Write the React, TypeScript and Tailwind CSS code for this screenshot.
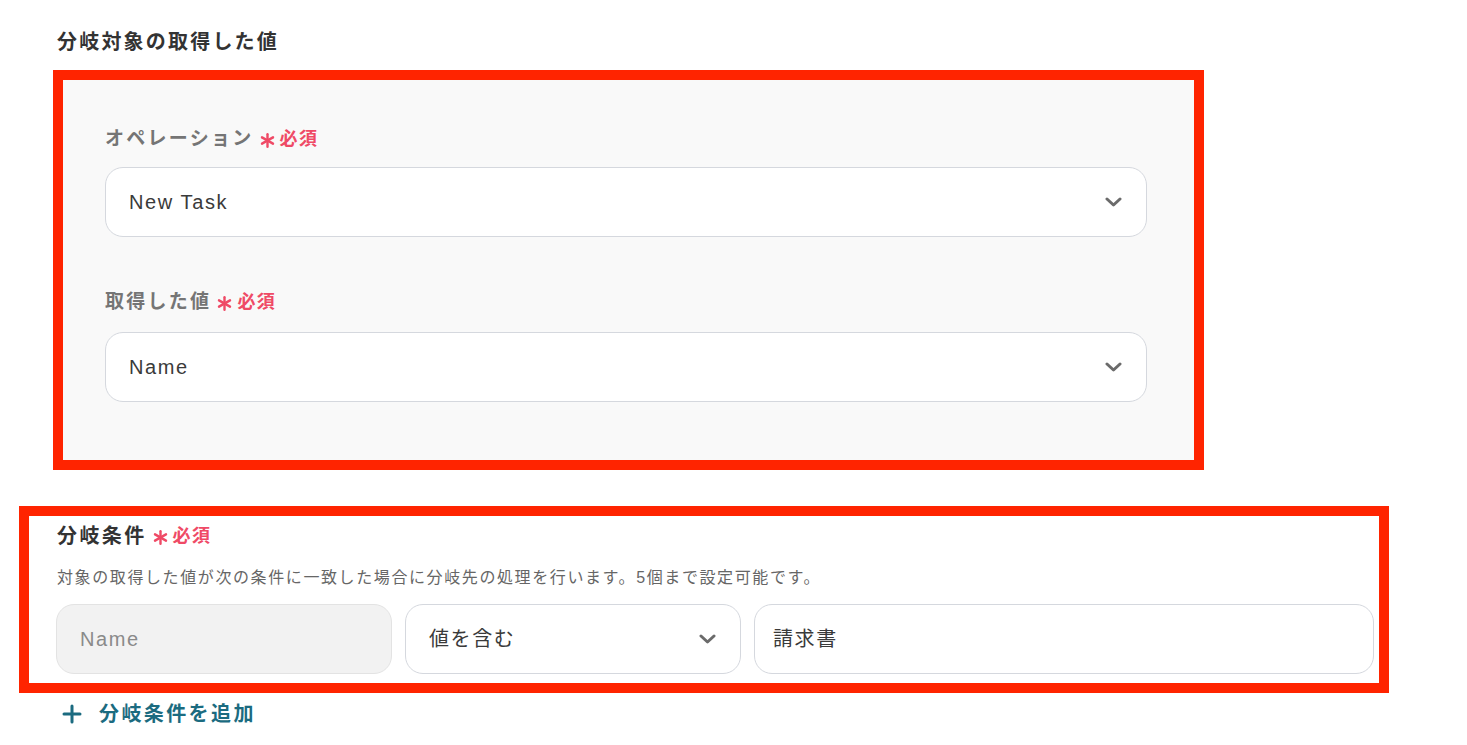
import type { ReactNode } from 'react';

const font = { fontFamily: '"Liberation Sans", "Noto Sans CJK JP", sans-serif' };

function Chevron() {
  return (
    <svg width="17" height="10" viewBox="0 0 17 10" fill="none" className="shrink-0">
      <path d="M2 2l6.5 6 6.5-6" stroke="#6b6b6b" strokeWidth="3" strokeLinecap="round" strokeLinejoin="round" />
    </svg>
  );
}

function Asterisk() {
  return (
    <svg width="15" height="15" viewBox="0 0 15 15" className="mt-[3px] shrink-0">
      <g stroke="#ef4a66" strokeWidth="2.4" strokeLinecap="round">
        <line x1="7.5" y1="1.2" x2="7.5" y2="13.8" />
        <line x1="2" y1="4.35" x2="13" y2="10.65" />
        <line x1="2" y1="10.65" x2="13" y2="4.35" />
      </g>
    </svg>
  );
}

function Required() {
  return (
    <span className="ml-[6px] flex items-center gap-[5px]">
      <Asterisk />
      <span className="text-[18px] font-bold tracking-[0.08em] text-[#ef4a66]">必須</span>
    </span>
  );
}

function Label({ children, dark }: { children: ReactNode; dark?: boolean }) {
  return (
    <div className="flex h-[28px] items-center">
      <span
        className={
          dark
            ? 'text-[20px] font-bold tracking-[0.12em] text-[#333]'
            : 'text-[19px] font-bold tracking-[0.12em] text-[#757575]'
        }
      >
        {children}
      </span>
      <Required />
    </div>
  );
}

function Select({ value, className }: { value: string; className?: string }) {
  return (
    <div className={`flex h-[70px] items-center justify-between rounded-[18px] border border-[#d5d8de] bg-white pl-[23px] pr-[24px] ${className ?? ''}`}>
      <span className="text-[20px] tracking-[0.08em] text-[#3a3a3a]">{value}</span>
      <Chevron />
    </div>
  );
}

export default function App() {
  return (
    <div style={font} className="min-h-[745px] w-[1467px] bg-white pt-[28px]">
      <h2 className="ml-[57px] h-[28px] text-[20px] leading-[28px] font-bold tracking-[0.11em] text-[#333]">分岐対象の取得した値</h2>

      <div className="mt-[14px] ml-[53px] w-[1151px] border-[10px] border-[#ff2400] bg-[#f9f9f9] pt-[45px] pr-[47px] pb-[58px] pl-[42px]">
        <Label>オペレーション</Label>
        <Select value="New Task" className="mt-[14px]" />
        <div className="mt-[51px]">
          <Label>取得した値</Label>
        </div>
        <Select value="Name" className="mt-[16px]" />
      </div>

      <div className="mt-[36px] ml-[19px] w-[1370px] border-[10px] border-[#ff2400] pt-[6px] pr-[5px] pb-[9px] pl-[27px]">
        <div className="pl-[1px]">
          <Label dark>分岐条件</Label>
        </div>
        <p className="mt-[16px] pl-[1px] text-[16px] leading-[24px] tracking-[0.1em] text-[#666]">
          対象の取得した値が次の条件に一致した場合に分岐先の処理を行います。5個まで設定可能です。
        </p>
        <div className="mt-[14px] flex gap-[13px]">
          <div className="flex h-[70px] w-[336px] items-center rounded-[18px] border border-[#e3e3e3] bg-[#f2f2f2] pl-[23px]">
            <span className="text-[20px] tracking-[0.08em] text-[#8a8a8a]">Name</span>
          </div>
          <Select value="値を含む" className="w-[336px]" />
          <div className="flex h-[70px] flex-1 items-center rounded-[18px] border border-[#d5d8de] bg-white pl-[18px]">
            <span className="text-[20px] tracking-[0.08em] text-[#3a3a3a]">請求書</span>
          </div>
        </div>
      </div>

      <button className="mt-[7px] ml-[62px] flex h-[28px] items-center gap-[17px] text-[#1b6b80]">
        <svg width="20" height="20" viewBox="0 0 20 20" fill="none">
          <path d="M10 2v16M2 10h16" stroke="#1b6b80" strokeWidth="3" strokeLinecap="round" />
        </svg>
        <span className="text-[20px] font-bold tracking-[0.12em]">分岐条件を追加</span>
      </button>
    </div>
  );
}
